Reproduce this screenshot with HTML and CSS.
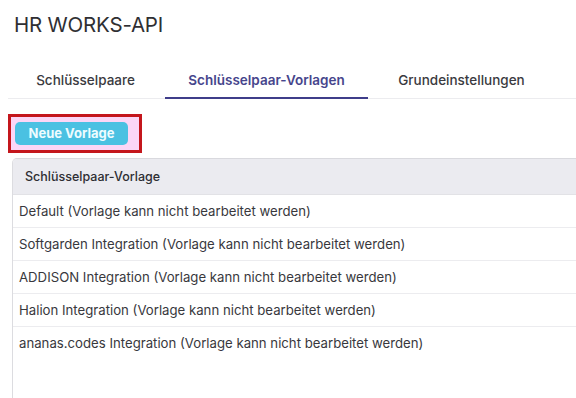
FILE: index.html
```html
<!DOCTYPE html>
<html lang="de">
<head>
<meta charset="utf-8">
<title>HR WORKS-API</title>
<link rel="stylesheet" href="styles.css">
</head>
<body>
<div class="page">
  <h1 class="title">HR WORKS-API</h1>
  <nav class="tabs">
    <div class="tab tab-1">Schlüsselpaare</div>
    <div class="tab tab-2 active">Schlüsselpaar-Vorlagen</div>
    <div class="tab tab-3">Grundeinstellungen</div>
  </nav>
  <div class="actions">
    <div class="highlight">
      <button class="btn">Neue Vorlage</button>
    </div>
  </div>
  <div class="table">
    <div class="thead">Schlüsselpaar-Vorlage</div>
    <div class="row">Default (Vorlage kann nicht bearbeitet werden)</div>
    <div class="row">Softgarden Integration (Vorlage kann nicht bearbeitet werden)</div>
    <div class="row">ADDISON Integration (Vorlage kann nicht bearbeitet werden)</div>
    <div class="row">Halion Integration (Vorlage kann nicht bearbeitet werden)</div>
    <div class="row last">ananas.codes Integration (Vorlage kann nicht bearbeitet werden)</div>
  </div>
</div>
</body>
</html>
```
FILE: styles.css
```css
* { box-sizing: border-box; }
html, body {
  margin: 0;
  padding: 0;
  background: #ffffff;
  overflow: hidden;
  height: 398px;
}
body {
  font-family: Inter, "Noto Sans", sans-serif;
  color: #333338;
}
.page {
  display: flex;
  flex-direction: column;
  height: 398px;
}
.title {
  margin: 11px 0 0 14px;
  font-size: 20.5px;
  font-weight: 400;
  line-height: 28px;
  color: #2f2f33;
  letter-spacing: -0.2px;
}
.tabs {
  display: flex;
  gap: 6px;
  margin: 26px 0 0 8px;
  padding-left: 4px;
  border-bottom: 1px solid #ececef;
}
.tab {
  font-size: 13.5px;
  line-height: 18px;
  padding: 6px 0 8px;
  text-align: center;
  color: #3a3a40;
  font-weight: 500;
  border-bottom: 2px solid transparent;
  margin-bottom: -1px;
}
.tab-1 { width: 147px; }
.tab-2 { width: 203px; }
.tab-3 { width: 175px; }
.tab.active {
  color: #46458c;
  font-weight: 600;
  border-bottom-color: #3f3d8a;
}
.actions {
  display: flex;
  margin: 15px 0 0 8px;
}
.highlight {
  border: 3px solid #c4161c;
  background: #fbd6f6;
  padding: 5px 11px 5px 4px;
}
.btn {
  display: block;
  width: 113px;
  height: 23px;
  border: none;
  border-radius: 5px;
  background: #4ac1e2;
  color: #eefcff;
  font-family: Inter, "Noto Sans", sans-serif;
  font-size: 13px;
  font-weight: 700;
  padding: 0;
  line-height: 23px;
}
.table {
  flex: 1;
  margin: 5px 0 0 12px;
  border-left: 1px solid #dcdce0;
  border-top: 1px solid #d9d9de;
  border-top-left-radius: 5px;
}
.thead {
  background: #ebebf0;
  height: 36px;
  line-height: 36px;
  padding-left: 12px;
  font-size: 12.5px;
  font-weight: 500;
  color: #2e2e33;
  border-top-left-radius: 4px;
  border-bottom: 1px solid #e2e2e6;
}
.row {
  height: 33px;
  line-height: 32px;
  padding-left: 6px;
  font-size: 13.2px;
  color: #38383d;
  border-bottom: 1px solid #ececef;
  white-space: nowrap;
}
.row:first-of-type { height: 35px; line-height: 36px; }
.row.last { border-bottom: none; }
```
